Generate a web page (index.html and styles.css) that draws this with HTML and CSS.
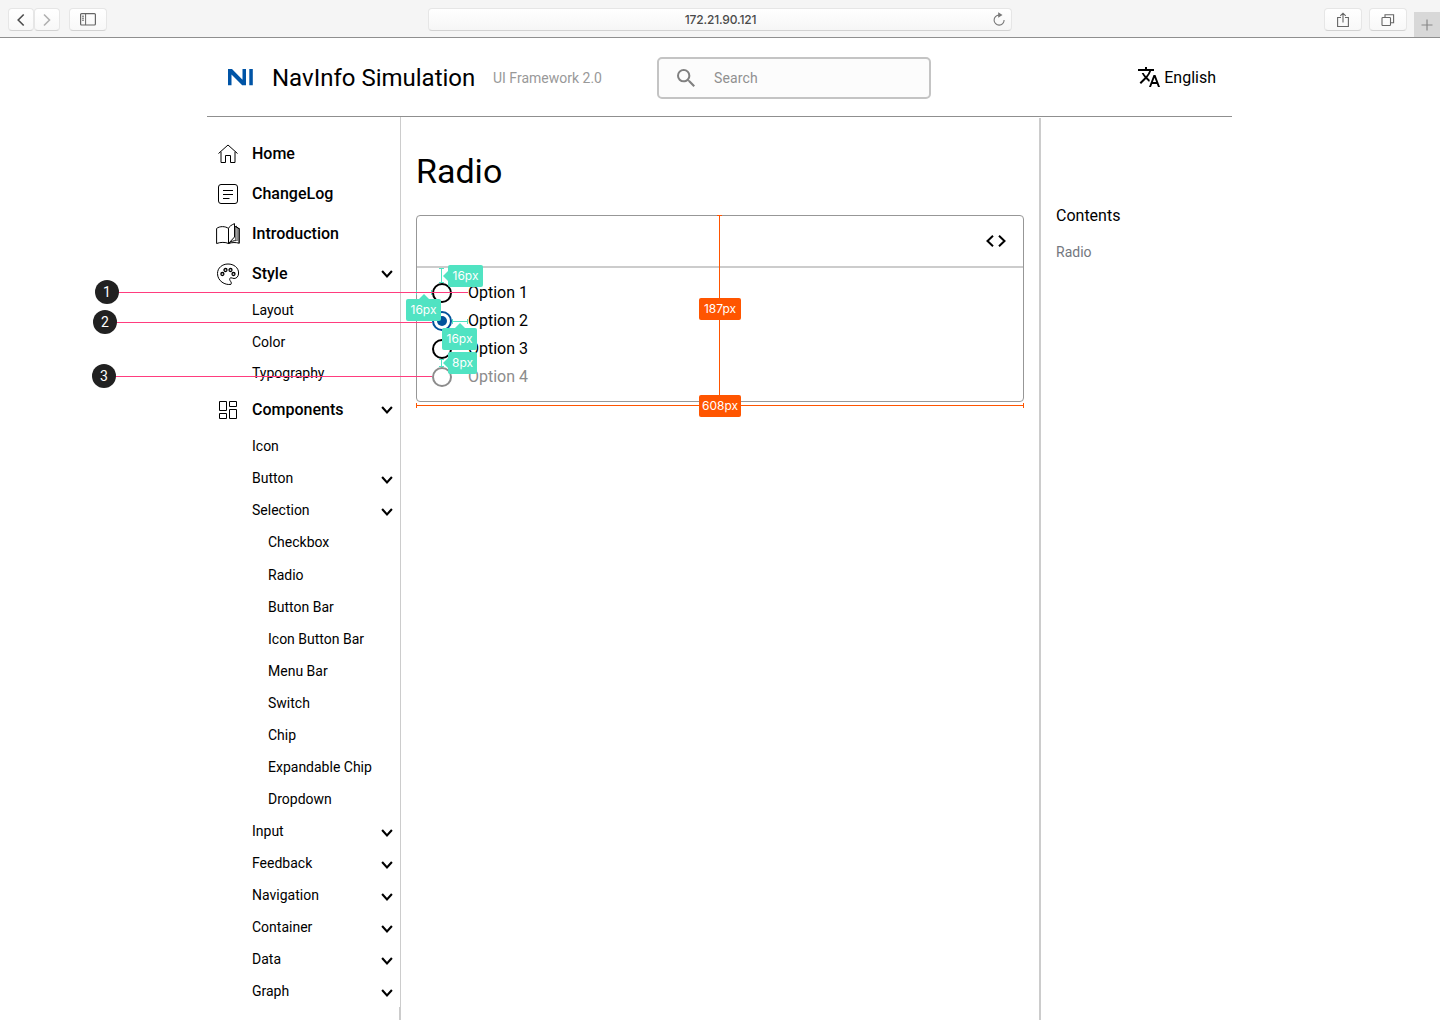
FILE: index.html
```html
<!DOCTYPE html>
<html lang="en">
<head>
<meta charset="utf-8">
<title>NavInfo Simulation</title>
<link rel="stylesheet" href="styles.css">
</head>
<body>
<svg width="0" height="0" class="defs">
  <symbol id="chev" viewBox="0 0 12 8"><path d="M1.100 1 6 6.400 10.900 1" fill="none" stroke="#000" stroke-width="2.100"/></symbol>
</svg>

<div class="browser">
  <div class="group">
    <span class="btn nav"><svg width="10" height="14" viewBox="0 0 10 14"><path d="M7.700 1.500 2.200 7 7.700 12.500" fill="none" stroke="#4d4d4d" stroke-width="1.600"/></svg></span>
    <span class="btn nav"><svg width="10" height="14" viewBox="0 0 10 14"><path d="M2 1.500 7.500 7 2 12.500" fill="none" stroke="#b0b0b0" stroke-width="1.600"/></svg></span>
  </div>
  <span class="btn wide side"><svg width="16" height="13" viewBox="0 0 16 13" fill="none" stroke="#666"><rect x=".6" y=".6" width="14.800" height="11.400" rx="1" stroke-width="1.200"/><path d="M5.600 .6v11.400M2 3.200h2M2 5.200h2M2 7.200h2"/></svg></span>
  <div class="url"><span>172.21.90.121</span><svg width="14" height="15" viewBox="0 0 14 15"><path d="M7.500 3.100H7A5 5 0 1 0 12.100 8" fill="none" stroke="#777" stroke-width="1.100"/><path d="M6.200.3 10.500 3 6.200 5.700z" fill="#777"/></svg></div>
  <span class="btn wide share"><svg width="14" height="16" viewBox="0 0 14 16" fill="none" stroke="#666" stroke-width="1.100"><path d="M5 5.500H1.600v9h10.800v-9H9M7 10.500V1.300M4.300 3.800 7 1.200l2.700 2.600"/></svg></span>
  <span class="btn wide"><svg width="14" height="14" viewBox="0 0 14 14" fill="none" stroke="#666" stroke-width="1.100"><rect x="1" y="4.500" width="8.500" height="8" rx=".8"/><path d="M4 4.300V1.800h8.600v8H9.700"/></svg></span>
  <span class="plus"><svg width="12" height="12" viewBox="0 0 12 12"><path d="M6 .5v11M.5 6h11" stroke="#888" stroke-width="1.200"/></svg></span>
</div>

<div class="page">
  <header class="header">
    <svg class="logo" width="26" height="17" viewBox="0 0 26 17" fill="#0054a6"><path d="M0 0H4L14.500 10.800V0H18V16.300H14.200L3.500 5.400V16.300H0zM21.300 0H24.800V16.300H21.300z"/></svg>
    <span class="brand">NavInfo Simulation</span>
    <span class="version">UI Framework 2.0</span>
    <div class="search">
      <svg width="18" height="18" viewBox="3 3 17.500 17.500" fill="#808080"><path d="M15.500 14h-.79l-.28-.27A6.470 6.470 0 0 0 16 9.500 6.500 6.500 0 1 0 9.500 16c1.610 0 3.090-.59 4.230-1.570l.27.28v.79l5 4.990L20.490 19l-4.990-5zm-6 0C7.010 14 5 11.990 5 9.500S7.010 5 9.500 5 14 7.010 14 9.500 11.990 14 9.500 14z"/></svg>
      <span>Search</span>
    </div>
    <div class="lang">
      <svg width="24" height="24" viewBox="0 0 24 24"><path d="M12.870 15.070l-2.540-2.510.03-.03A17.520 17.520 0 0 0 14.070 6H17V4h-7V2H8v2H1v2h11.170C11.500 7.920 10.440 9.750 9 11.350 8.070 10.320 7.300 9.190 6.690 8h-2c.73 1.630 1.730 3.170 2.980 4.560l-5.090 5.020L4 19l5-5 3.110 3.110.76-2.040zM18.500 10h-2L12 22h2l1.120-3h4.750L21 22h2l-4.500-12zm-2.620 7l1.620-4.330L19.120 17h-3.240z"/></svg>
      <span>English</span>
    </div>
  </header>

  <div class="columns">
    <nav class="sidebar">
      <div class="item top"><svg class="ico" viewBox="0 0 24 24"><path d="M2.500 11.500 12 3l9.500 8.500M5 9.800V20.500H9.500V13.500H14.500V20.500H19V9.800"/></svg><span>Home</span></div>
      <div class="item top"><svg class="ico" viewBox="0 0 24 24"><rect x="2.500" y="2.500" width="19" height="19" rx="2.500"/><path d="M7 8.500H17M7 12.500H17M7 16.500H13.500"/></svg><span>ChangeLog</span></div>
      <div class="item top"><svg class="ico" viewBox="0 0 24 24"><path d="M12.500 21.500C9.500 20 4.500 20 .6 21.500V6.500C3.500 4 9.500 4 12.500 6.500V21.500L18.500 15V1.600C15.500 3 13 4.500 12.500 6.500M20.500 18.500c-3 0-5.500 1-8 3"/><path d="M19.600 5v13.500M21.200 5v14M22.800 6v15" stroke="#777" stroke-width="1.300"/><path d="M18.500 5l2-.8v1.300h1.500v1h1.300v14.800C20 20.200 16 20.300 12.500 21.500"/></svg><span>Introduction</span></div>
      <div class="item top"><svg class="ico" viewBox="0 0 24 24"><path d="M15 22.300C9 23.500 1.500 19 1.500 11.500 1.500 6 6.200 2 12 2s10.600 3.700 10.600 9c0 3.500-2 5.500-4.600 5.500-1.300 0-1.700-.7-3-.7-1 0-1.500.8-1.300 1.800.2 1.300 1.600 2 1.600 3.500 0 .6-.1 1-.3 1.200z"/><g stroke-width="1.300"><circle cx="6.400" cy="12" r="1.500"/><circle cx="9.500" cy="8" r="1.500"/><circle cx="14.500" cy="8" r="1.500"/><circle cx="17.500" cy="12" r="1.500"/></g></svg><span>Style</span><svg class="chev"><use href="#chev"/></svg></div>
      <div class="item sub"><span>Layout</span></div>
      <div class="item sub"><span>Color</span></div>
      <div class="item sub typo"><span>Typography</span></div>
      <div class="item top"><svg class="ico" viewBox="0 0 24 24"><path d="M3.500 3.500h7v9h-7zM13.500 3.500h7v5h-7zM3.500 15.500h7v5h-7zM13.500 11.500h7v9h-7z"/></svg><span>Components</span><svg class="chev"><use href="#chev"/></svg></div>
      <div class="item sub"><span>Icon</span></div>
      <div class="item sub"><span>Button</span><svg class="chev"><use href="#chev"/></svg></div>
      <div class="item sub"><span>Selection</span><svg class="chev"><use href="#chev"/></svg></div>
      <div class="item leaf first"><span>Checkbox</span></div>
      <div class="item leaf"><span>Radio</span></div>
      <div class="item leaf"><span>Button Bar</span></div>
      <div class="item leaf"><span>Icon Button Bar</span></div>
      <div class="item leaf"><span>Menu Bar</span></div>
      <div class="item leaf"><span>Switch</span></div>
      <div class="item leaf"><span>Chip</span></div>
      <div class="item leaf"><span>Expandable Chip</span></div>
      <div class="item leaf"><span>Dropdown</span></div>
      <div class="item sub"><span>Input</span><svg class="chev"><use href="#chev"/></svg></div>
      <div class="item sub"><span>Feedback</span><svg class="chev"><use href="#chev"/></svg></div>
      <div class="item sub"><span>Navigation</span><svg class="chev"><use href="#chev"/></svg></div>
      <div class="item sub"><span>Container</span><svg class="chev"><use href="#chev"/></svg></div>
      <div class="item sub"><span>Data</span><svg class="chev"><use href="#chev"/></svg></div>
      <div class="item sub"><span>Graph</span><svg class="chev"><use href="#chev"/></svg></div>
      <div class="tail"></div>
    </nav>

    <main class="main">
      <h1>Radio</h1>
      <section class="card">
        <div class="card-head"><svg width="20" height="12" viewBox="0 0 20 12"><path d="M7 .8 1.500 6 7 11.200M13 .8 18.500 6 13 11.200" fill="none" stroke="#000" stroke-width="2"/></svg></div>
        <div class="card-body">
          <div class="option"><i class="radio"></i><span>Option 1</span></div>
          <div class="option"><i class="radio on"></i><span>Option 2</span></div>
          <div class="option"><i class="radio"></i><span>Option 3</span></div>
          <div class="option off"><i class="radio"></i><span>Option 4</span></div>
        </div>
      </section>
    </main>

    <aside class="toc">
      <div class="toc-title">Contents</div>
      <div class="toc-link">Radio</div>
    </aside>
  </div>
</div>

<!-- measurement and callout overlay -->
<div class="overlay">
  <i class="measure v o-height"></i>
  <i class="measure h o-width"></i>
  <span class="tag orange t-187">187px</span>
  <span class="tag orange t-608">608px</span>
  <i class="measure v g-top"></i>
  <i class="measure h g-left"></i>
  <i class="measure h g-label"></i>
  <i class="measure v g-gap"></i>
  <i class="lead l1"></i><i class="lead l2"></i><i class="lead l3"></i>
  <span class="tag green left t-top">16px</span>
  <span class="tag green up t-left">16px</span>
  <span class="tag green up t-label">16px</span>
  <span class="tag green left t-gap">8px</span>
  <span class="num n1">1</span><span class="num n2">2</span><span class="num n3">3</span>
</div>
</body>
</html>
```
FILE: styles.css
```css
* { box-sizing: border-box; }
body { margin: 0; height: 1023px; overflow: hidden; background: #fff; color: #000; font-family: Roboto, sans-serif; }
svg { display: block; flex: none; }
.defs { position: absolute; }

.browser { display: flex; align-items: flex-start; height: 38px; padding: 8px 0 0 8px; background: #f5f5f5; border-bottom: 1px solid #8f8f8f; }
.group { display: flex; }
.btn { display: flex; align-items: center; justify-content: center; height: 23px; border: 1px solid #e6e6e6; border-bottom-color: #d2d2d2; border-radius: 4px; background: linear-gradient(#fff, #f8f8f8); }
.nav { width: 26px; }
.wide { width: 38px; }
.side { margin-left: 9px; }
.url { display: flex; align-items: center; justify-content: flex-end; width: 584px; height: 23px; margin-left: 321px; padding-right: 5px; border: 1px solid #e6e6e6; border-bottom-color: #d2d2d2; border-radius: 4px; background: linear-gradient(#fff, #f6f6f6); }
.url span { flex: 1; padding-left: 20px; text-align: center; font: 500 12px/22px Inter, sans-serif; letter-spacing: -.15px; color: #4a4a4a; }
.share { margin: 0 7px 0 312px; }
.plus { display: flex; align-items: center; justify-content: center; width: 26px; height: 25px; margin: 4px 0 0 7px; background: #d8d8d8; }

.page { width: 1025px; margin-left: 207px; }
.header { display: flex; align-items: center; height: 79px; padding: 1px 16px 0 21px; border-bottom: 1px solid #8f8f8f; }
.brand { width: 221px; margin-left: 18px; padding-top: 1px; font-size: 24px; white-space: nowrap; }
.version { width: 164px; padding-top: 1px; font-size: 14px; color: #999; }
.search { display: flex; align-items: center; gap: 19px; width: 274px; height: 42px; margin-top: 1px; padding-left: 18px; border: 2px solid #c4c4c4; border-radius: 5px; background: #fcfcfc; font-size: 14px; letter-spacing: .15px; color: #909090; }
.lang { display: flex; align-items: center; gap: 3px; margin: -1px 0 0 auto; font-size: 16px; }

.columns { display: flex; height: 903px; }
.sidebar { width: 194px; padding-top: 17px; border-right: 1px solid #ccc; }
.item { display: flex; align-items: center; padding: 0 7px 0 45px; font-size: 14px; height: 32px; }
.item.top { height: 40px; padding-left: 9px; font-size: 16px; font-weight: 500; }
.item.top span { padding-bottom: 2px; }
.item.leaf { padding-left: 61px; }
.item.first { height: 33px; padding-bottom: 2px; }
.item.typo { padding-bottom: 2px; }
.ico { width: 24px; height: 24px; margin-right: 12px; fill: none; stroke: #000; stroke-width: 1; }
.chev { width: 12px; height: 8px; margin-left: auto; }
.sub .chev { margin-top: 3px; }
.tail { width: 1px; height: 13px; margin-left: auto; background: #ccc; }

.main { flex: 1; padding: 30px 15px 0 15px; }
h1 { margin: 0; font-size: 34px; font-weight: 400; line-height: 48px; }
.card { height: 187px; margin-top: 20px; border: 1px solid #979797; border-radius: 4px; }
.card-head { display: flex; align-items: center; justify-content: flex-end; height: 52px; padding-right: 17px; border-bottom: 2px solid #ccc; }
.card-body { display: flex; flex-direction: column; gap: 8px; padding: 15px; }
.option { display: flex; align-items: center; gap: 16px; height: 20px; font-size: 16px; }
.option span { padding-bottom: 2px; }
.radio { position: relative; width: 20px; height: 20px; border: 2px solid #000; border-radius: 50%; }
.radio.on { border-color: #00529b; }
.radio.on::after { content: ""; position: absolute; inset: 3px; border-radius: 50%; background: #00529b; }
.off { color: #8c8c8c; }
.off .radio { border-color: #8c8c8c; }

.toc { width: 193px; height: 902px; margin-top: 1px; padding: 87px 0 0 15px; border-left: 2px solid #ccc; }
.toc-title { font-size: 16px; line-height: 22px; }
.toc-link { margin-top: 15px; font-size: 14px; line-height: 20px; color: #737780; }

.overlay { position: absolute; inset: 0; color: #50e3c2; }
.overlay > * { position: absolute; }
.measure::before { content: ""; position: absolute; background: currentColor; }
.measure.v { width: 5px; border: solid currentColor; border-width: 1px 0; }
.measure.v::before { left: 2px; top: 0; bottom: 0; width: 1px; }
.measure.h { height: 5px; border: solid currentColor; border-width: 0 1px; }
.measure.h::before { top: 2px; left: 0; right: 0; height: 1px; }
.o-height, .o-width { color: #ff5500; }
.o-height { left: 717px; top: 215px; height: 187px; }
.o-width { left: 416px; top: 403px; width: 608px; }
.g-top { left: 439px; top: 268px; height: 15px; }
.g-left { left: 416px; top: 290px; width: 16px; }
.g-label { left: 452px; top: 319px; width: 16px; }
.g-gap { left: 439px; top: 359px; height: 8px; }
.tag { height: 22px; border-radius: 2px; font: 12px/22px Inter, sans-serif; text-align: center; color: #fff; }
.orange { width: 42px; background: #ff5500; }
.green { width: 35px; background: #50e3c2; }
.t-187 { left: 699px; top: 298px; }
.t-608 { left: 699px; top: 395px; }
.t-top { left: 448px; top: 265px; }
.t-left { left: 406px; top: 299px; }
.t-label { left: 442px; top: 328px; }
.t-gap { left: 448px; top: 352px; width: 29px; }
.green::before { content: ""; position: absolute; border: 5px solid transparent; }
.green.left::before { left: -10px; top: 6px; border-right-color: #50e3c2; }
.green.up::before { left: 50%; margin-left: -5px; top: -10px; border-bottom-color: #50e3c2; }
.lead { height: 1px; background: #ff3d7f; }
.l1 { left: 118px; top: 292px; width: 350px; }
.l2 { left: 116px; top: 322px; width: 316px; }
.l3 { left: 115px; top: 376px; width: 317px; }
.num { width: 24px; height: 24px; border-radius: 50%; background: #212121; font: 14px/24px Roboto, sans-serif; text-align: center; color: #fff; }
.n1 { left: 95px; top: 280px; }
.n2 { left: 93px; top: 310px; }
.n3 { left: 92px; top: 364px; }
```
